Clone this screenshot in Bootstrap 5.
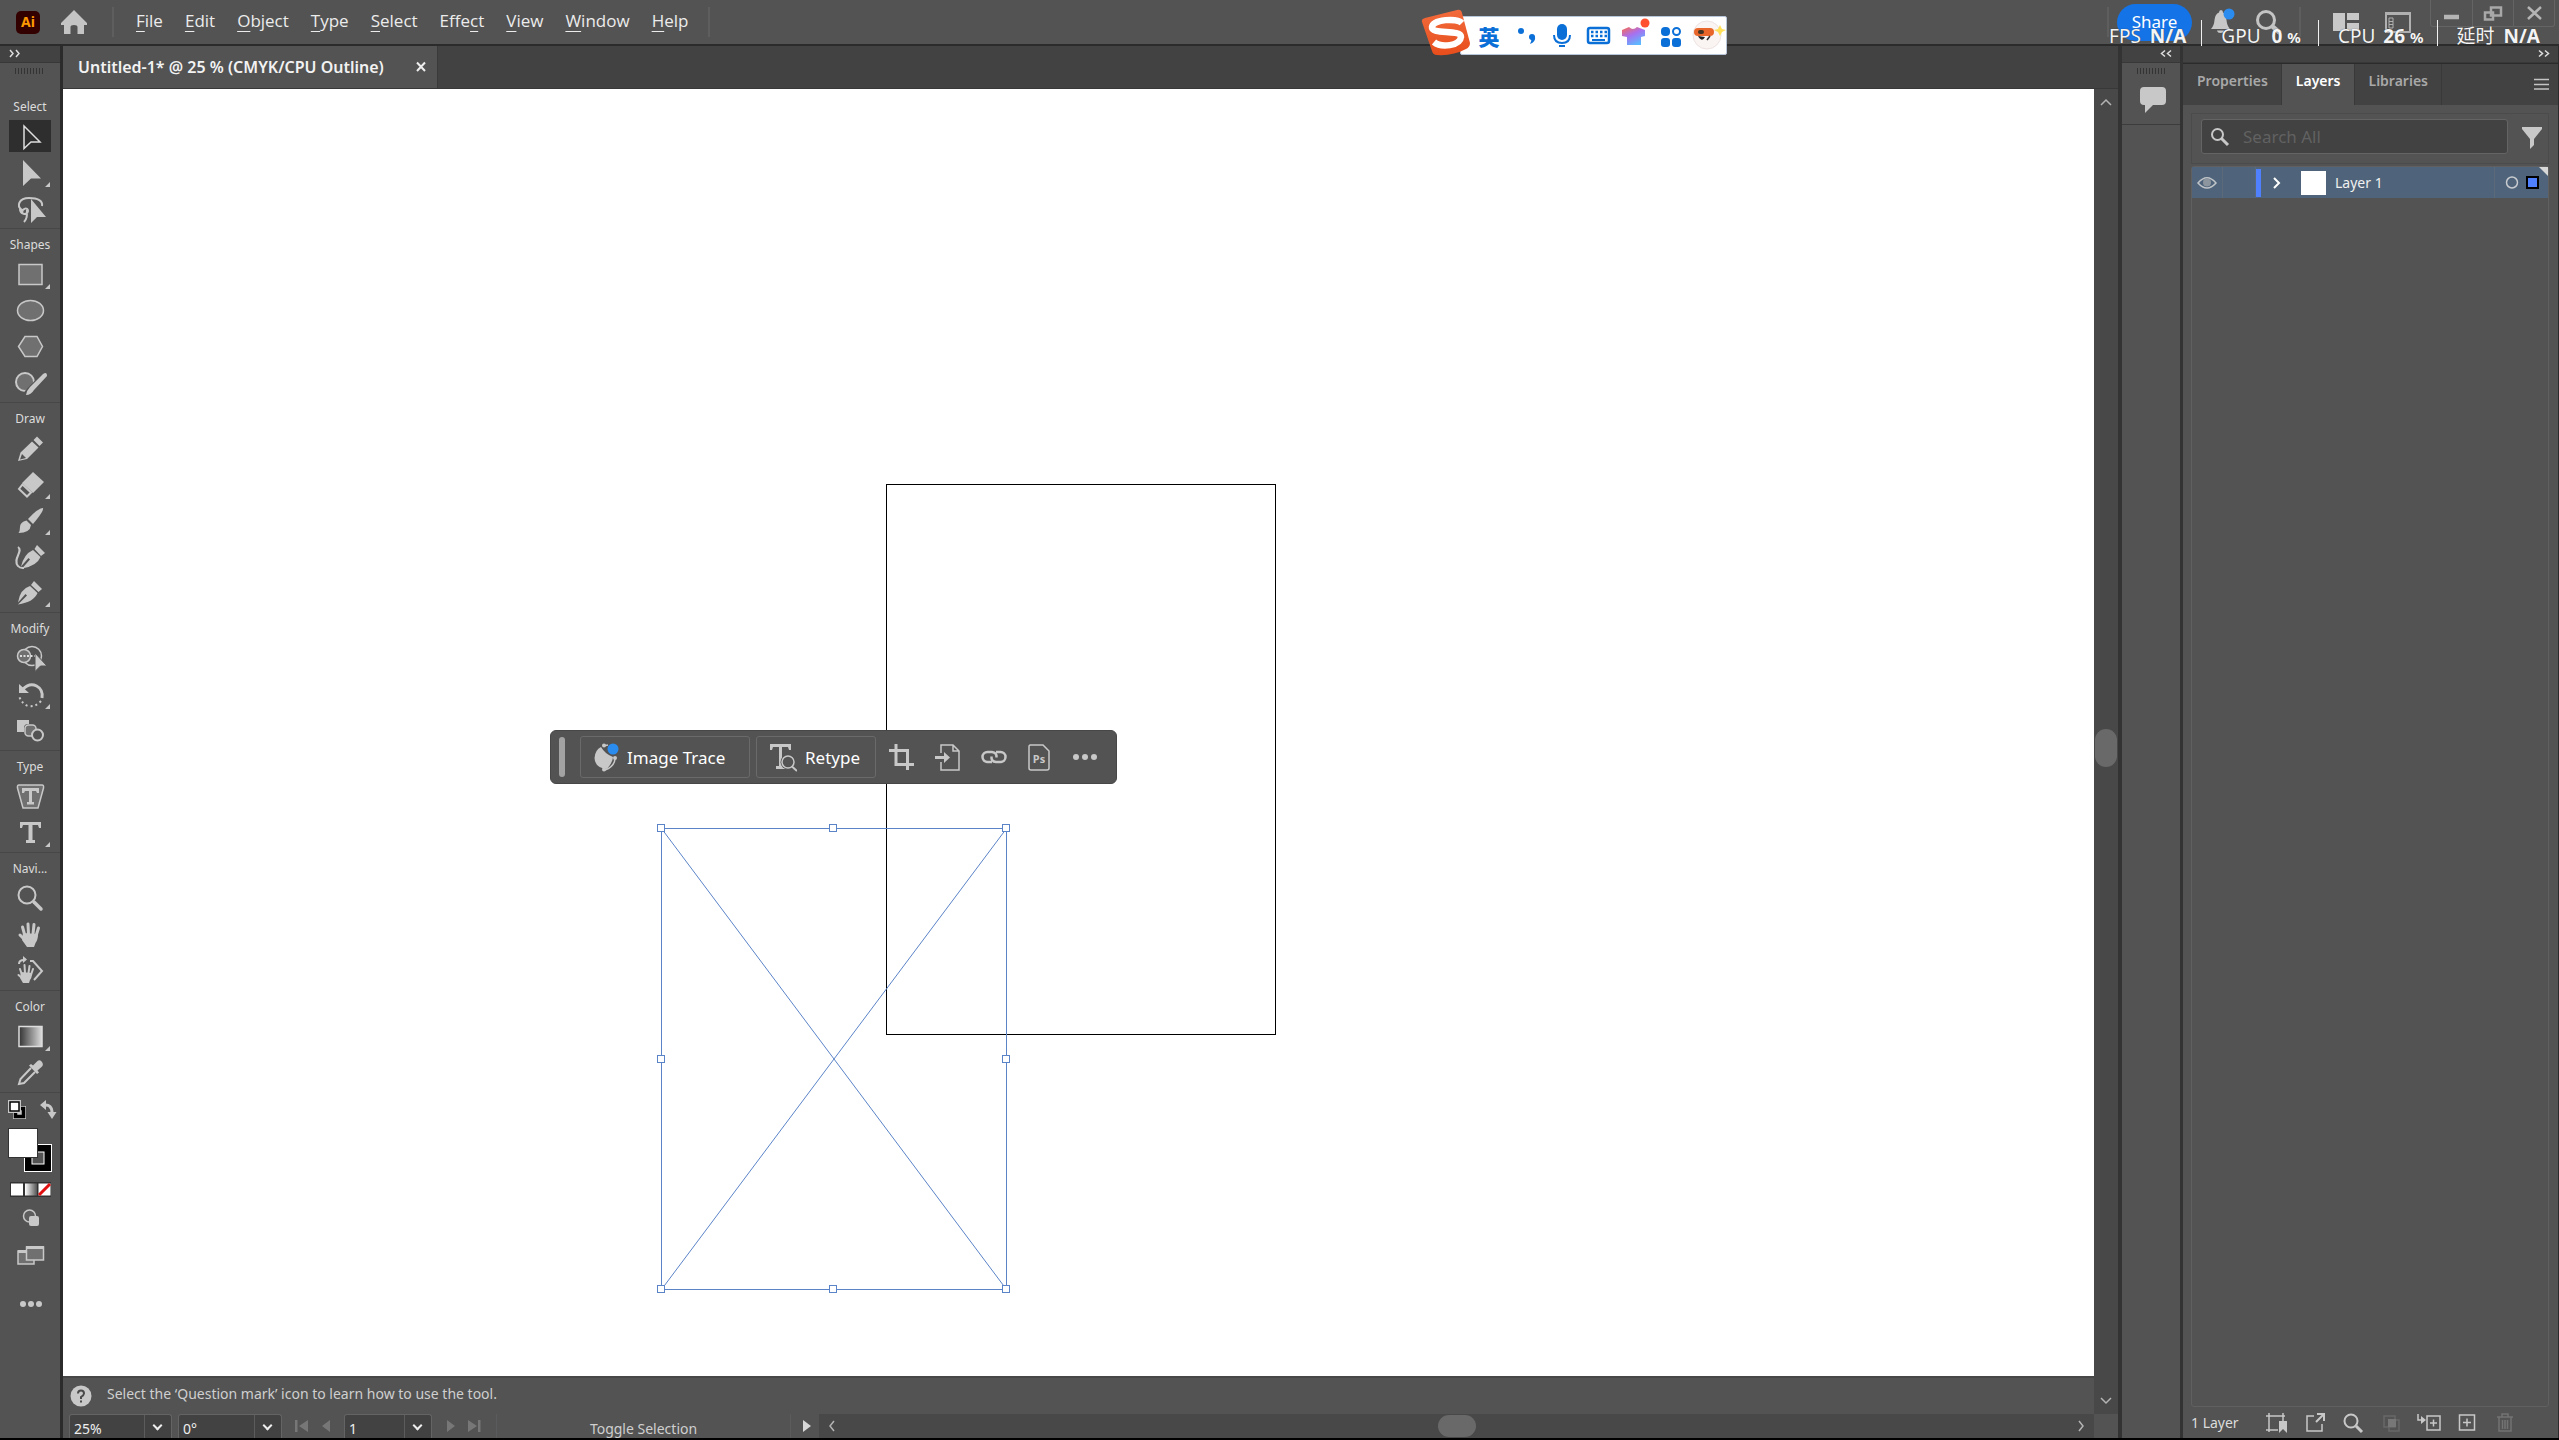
<!DOCTYPE html>
<html lang="en">
<head>
<meta charset="utf-8">
<meta name="viewport" content="width=device-width, initial-scale=1">
<title>Untitled-1* @ 25 % (CMYK/CPU Outline)</title>
<link href="https://cdn.jsdelivr.net/npm/bootstrap@5.3.0/dist/css/bootstrap.min.css" rel="stylesheet">
<style>
:root{--ui:#535353;--dark:#424242;--line:#2b2b2b;--soft:#484848;--ico:#c8c8c8;--txt:#dcdcdc}
body{background:var(--ui);color:var(--txt);font-family:"Noto Sans","Noto Sans CJK SC",sans-serif;font-size:14px;line-height:20px;border-bottom:2px solid #000;overflow:hidden}
button{background:none;border:0;padding:0;color:inherit;display:block}
svg{display:block;fill:none;stroke:none}
.f{fill:var(--ico)}.s{stroke:var(--ico);stroke-width:2}.sf{stroke:var(--ico);stroke-width:2;fill:#707070}
.app-bar{height:46px;border-bottom:2px solid var(--line)}
.rule-v{width:2px;height:30px;background:#5e5e5e}
.menus{gap:22px;padding:0 20px 2px 22px}
.menus a{color:#ececec;text-decoration:none;font-family:"Open Sans","Noto Sans",sans-serif;font-size:17px;line-height:24px}
.menus u{text-underline-offset:4px;text-decoration-thickness:1px}
.share{width:75px;height:37px;border-radius:19px;background:#1473e6;color:#fff;font-size:17px}
.win-ctl{height:27px;margin-left:19px;margin-right:4px;border:1px solid #646464;border-top:0;border-radius:0 0 3px 3px}
.win-ctl button{width:41px;height:26px}
.win-ctl button+button{border-left:1px solid #646464}
/* left tool column */
.tools{width:63px;border-right:3px solid var(--line);flex:none}
.strip{height:17px;background:var(--dark);border-bottom:1px solid #383838}
.grip-row{height:28px}
.tool-group{border-bottom:1px solid #474747;margin:0;padding-bottom:2px}
.tool-group h2{font-size:12px;line-height:18px;font-weight:400;text-align:center;margin:0;padding:7px 0 2px}
.tool-group button{width:60px;height:36px}
.tool-group button.on svg{background:linear-gradient(#2e2e2e,#2e2e2e) center/42px 32px no-repeat}
/* document */
.doc{min-width:0}
.tab-strip{height:43px;background:var(--dark);border-bottom:1px solid #383838}
.doc-tab{background:var(--ui);padding:0 10px 0 15px;width:375px;color:#f2f2f2;font-size:16px;font-weight:600;border-right:1px solid #3a3a3a;white-space:nowrap}
.canvas-area{background:#fff;min-height:0}
.v-scroll{width:24px;background:var(--soft)}
.v-thumb{width:22px;height:38px;border-radius:11px;background:#696969;margin-bottom:8px}
.help-bar{height:38px;padding:0 11px;border-top:2px solid #474747;color:#cfcfcf;gap:15px}
.status-bar{height:24px}
.combo{border:1px solid #646464;border-bottom:0;background:var(--dark);border-radius:3px 3px 0 0;height:24px}
.combo select{appearance:none;background:none;border:0;color:#eee;width:100%;height:23px;padding:4px 0 0 4px;outline:0;font-size:14px;line-height:19px}
.combo::before{content:"";position:absolute;right:26px;top:0;bottom:0;border-left:1px solid #5c5c5c}
.combo::after{content:"";position:absolute;right:10px;top:7px;width:7px;height:7px;border:solid #eee;border-width:0 2px 2px 0;transform:rotate(45deg);pointer-events:none}
.status-label{width:295px;padding-top:5px;color:#cfcfcf;line-height:19px}
.h-scroll{background:var(--soft)}
.h-thumb{width:38px;height:22px;border-radius:11px;background:#696969}
/* contextual bar */
.ctx-bar{left:487px;top:641px;width:567px;height:54px;background:var(--ui);border-radius:6px;padding:0 18px 0 8px;border:1px solid #474747}
.ctx-grip{width:6px;height:40px;border-radius:3px;background:#a3a3a3;margin-right:15px}
.ctx-bar .boxed{border:1px solid #6a6a6a;border-radius:3px;height:42px;color:#fff;font-size:17px;padding-left:12px;gap:8px}
.ctx-bar .boxed span{padding-top:2px}
/* right side */
.dock{width:65px;border-left:4px solid #333;border-right:3px solid #333;flex:none}
.panel{width:376px;border-right:1px solid var(--line);flex:none}
.panel-tabs{height:42px;background:var(--dark);border-top:1px solid var(--line)}
.panel-tabs .nav-link{padding:7px 13px 9px 14px;color:#a8a8a8;font-size:14px;font-weight:600;line-height:20px;border-right:1px solid #393939;border-radius:0}
.panel-tabs .nav-link.active{background:var(--ui);color:#fff}
.search-group{border:1px solid #4b4b4b;height:51px;padding:5px 5px 0 9px;margin-top:8px}
.search-field{width:307px;height:35px;border:1px solid #646464;border-radius:3px;background:var(--dark);padding:0 9px 0 8px;gap:13px}
.search-field input{background:none;border:0;outline:0;color:#ddd;font-size:17px;width:100%;padding:0}
.search-field input::placeholder{color:#616161;opacity:1}
.layer-list{border:1px solid #606060;border-radius:3px;margin-top:2px}
.layer-row{height:31px;background:#4f647a;color:#f0f0f0}
.layer-row .cell{height:31px;border-right:1px solid #5b6a7b}
.panel-foot{height:31px;padding:0 34px 0 8px}
.panel-foot button{width:38px}
.panel-foot svg{margin:0 auto}
.wrap-x{padding:0 9px 0 8px}
/* floating overlays */
.ime{left:calc(50% + 141px);top:8px;height:48px;width:306px}
.ime-body{left:39px;top:8px;right:0;height:39px;background:#fff;border:1px solid #b8c6da;border-radius:2px}
.ime-cn{font:900 21px/30px "Noto Sans CJK SC",sans-serif;color:#0b6fd8;margin-left:18px}
.perf{right:19px;top:20px;height:26px;color:#f4f4f4;font-size:19px;line-height:26px;text-shadow:0 0 1px #333}
.perf>div+div{border-left:1px solid #f0f0f0}
.perf>div>*{margin-top:3px}
.perf small{font-size:15px;font-weight:700}
</style>
<script src="https://cdn.jsdelivr.net/npm/bootstrap@5.3.0/dist/js/bootstrap.bundle.min.js"></script>
</head>
<body class="vh-100 d-flex flex-column position-relative m-0">

<header class="app-bar d-flex align-items-center flex-shrink-0">
  <svg class="ms-3 me-3" width="24" height="23" viewBox="0 0 24 23"><rect width="24" height="23" rx="5" fill="#330000"/><text x="12" y="16" text-anchor="middle" font-size="14" font-weight="700" fill="#ff9a00">Ai</text></svg>
  <button class="ms-1" aria-label="Home"><svg width="28" height="26" viewBox="0 0 28 26"><path fill="#c4c4c4" d="M14 1 L27 14 V16 H24 V25 H17.500 V18 Q17.500 16 14 16 T10.500 18 V25 H4 V16 H1 V14Z"/></svg></button>
  <div class="rule-v ms-4"></div>
  <nav class="menus d-flex">
    <a href="#"><u>F</u>ile</a><a href="#"><u>E</u>dit</a><a href="#"><u>O</u>bject</a><a href="#"><u>T</u>ype</a><a href="#"><u>S</u>elect</a><a href="#">Effe<u>c</u>t</a><a href="#"><u>V</u>iew</a><a href="#"><u>W</u>indow</a><a href="#"><u>H</u>elp</a>
  </nav>
  <div class="rule-v"></div>
  <div class="ms-auto d-flex align-items-center h-100">
    <div class="rule-v me-2"></div>
    <button class="share">Share</button>
    <button style="margin-left:19px" aria-label="Notifications"><svg width="28" height="28" viewBox="0 0 28 28"><path class="f" d="M0 21 Q3 18 3.500 12 Q4 6 8 4.500 Q8 2 10 2 T12 4.500 Q15 6 15.500 12 Q16 18 19 21Z M6 22.500 H13 Q12.500 25 9.500 25 T6 22.500Z"/><circle cx="18" cy="6" r="5.500" fill="#2b8cf0"/></svg></button>
    <button class="ms-3" aria-label="Search"><svg width="28" height="28" viewBox="0 0 28 28"><g stroke="#c4c4c4"><circle cx="11" cy="12" r="8.500" stroke-width="3"/><path d="M17.500 18.500 L25 25" stroke-width="4.500"/></g></svg></button>
    <div class="rule-v ms-3" style="margin-right:32px"></div>
    <button aria-label="Workspace"><svg width="26" height="26" viewBox="0 0 26 26"><path class="f" d="M0 4 H12 V22 H0Z M14 4 H26 V11 H14Z M14 14 H26 V22 H14Z"/></svg></button>
    <button style="margin-left:26px" aria-label="Screen"><svg width="26" height="26" viewBox="0 0 26 26"><path d="M1 4 H25 V23 H1Z" stroke="#b0b0b0" stroke-width="2"/><path d="M1 4.500 H25" stroke="#b0b0b0" stroke-width="3"/><path d="M4 9 H8 V19 H4Z M4 12.500 H8 M4 15.500 H8" stroke="#b0b0b0"/></svg></button>
    <div class="win-ctl d-flex align-self-start">
      <button aria-label="Minimize"><svg width="40" height="26"><path d="M13 17 H28" stroke="#b4b4b4" stroke-width="4.500"/></svg></button>
      <button aria-label="Restore"><svg width="40" height="26"><path d="M18 7.500 H28 V15.500 H18Z M12 12.500 H20 V19.500 H12Z" stroke="#a8a8a8" stroke-width="2.500"/></svg></button>
      <button aria-label="Close"><svg width="40" height="26"><path d="M14 7 L27 19 M27 7 L14 19" stroke="#b4b4b4" stroke-width="2.500"/></svg></button>
    </div>
  </div>
</header>

<main class="d-flex flex-grow-1" style="min-height:0">
  <aside class="tools d-flex flex-column">
    <div class="strip"><svg width="60" height="16"><path d="M10 4 L13 7.500 L10 11 M16 4 L19 7.500 L16 11" stroke="#ddd" stroke-width="1.500"/></svg></div>
    <div class="grip-row"><svg width="60" height="28"><path d="M15 8 H44" stroke="#343434" stroke-width="6" stroke-dasharray="1 2"/></svg></div>
    <section class="tool-group"><h2>Select</h2>
      <button class="on" aria-label="Selection"><svg width="60" height="36"><path d="M24 8 V30.500 L31 24 H40Z" stroke="#dedede" stroke-width="1.500"/></svg></button>
      <button aria-label="Direct selection"><svg width="60" height="36"><path class="f" d="M23 6 V32 L31 24.500 H41Z M50 28 V33 H45Z"/></svg></button>
      <button aria-label="Lasso"><svg width="60" height="36"><path class="s" d="M22 20 C16 16 19 8 29 8 C38 8 43 11 42 16 M20 19 C20 24 27 26 28 21 C28 17 22 18 22 23 M27 20 C27 26 27 29 24 32"/><path class="f" d="M31 9 V33 L37 27 H46Z"/></svg></button>
    </section>
    <section class="tool-group"><h2>Shapes</h2>
      <button aria-label="Rectangle"><svg width="60" height="36"><path class="sf" style="stroke-width:1.500" d="M19 8.500 H42 V28.500 H19Z"/><path class="f" d="M50 28 V33 H45Z"/></svg></button>
      <button aria-label="Ellipse"><svg width="60" height="36"><ellipse class="sf" style="stroke-width:1.500" cx="30.500" cy="18.500" rx="13" ry="10"/></svg></button>
      <button aria-label="Polygon"><svg width="60" height="36"><path class="sf" style="stroke-width:1.500" d="M25 8.500 H37 L42.500 18.500 L37 28.500 H25 L18.500 18.500Z"/></svg></button>
      <button aria-label="Shaper"><svg width="60" height="36"><circle class="sf" cx="25" cy="18" r="9"/><path d="M27 30 L44 12" stroke="#535353" stroke-width="7"/><path class="f" d="M43 10 Q47 7 47 12 L34 26 Q31 31 26 31 Q27 26 30 23Z"/></svg></button>
    </section>
    <section class="tool-group"><h2>Draw</h2>
      <button aria-label="Pencil"><svg width="60" height="36"><path class="f" d="M37 6.500 L43 12.500 L39.500 16 L33.500 10Z M32 11.500 L38.500 17.500 L27 29 L18 31 L20.500 22.500Z"/><path fill="#535353" d="M22 24 L26 28 L20 29.500Z"/></svg></button>
      <button aria-label="Eraser"><svg width="60" height="36"><path class="f" d="M33 6 L44 16 L33 27 L22 17Z M50 28 V33 H45Z"/><path class="s" d="M22.500 18.500 L31 26.500 L27 30.500 L19 23Z"/></svg></button>
      <button aria-label="Paintbrush"><svg width="60" height="36"><path class="f" d="M43 6 Q44 9 33 22 L28 17 Q38 6 43 6Z M26.500 18.500 L31 23 Q30 31 18.500 31 Q20 29 20 25 Q20 20 26.500 18.500Z M50 28 V33 H45Z"/></svg></button>
      <button aria-label="Curvature"><svg width="60" height="36"><path class="f" d="M37 7 L45 15 L41 18 L34.500 11Z M33 12 L40.500 19 Q37 28 22 30.500 L30 21.500 L28.500 20 L21 28.500 Q24 16 33 12Z"/><path class="s" d="M18 9 C24 13 12 21 18 28 Q20 30.500 24 30"/></svg></button>
      <button aria-label="Pen"><svg width="60" height="36"><path class="f" d="M34 7 L42 15 L38.500 18 L31 11Z M30 12 L37.500 19 Q34 28 18 30.500 L27 21.500 L25.500 20 L18 28.500 Q20 15 30 12Z M50 28 V33 H45Z"/></svg></button>
    </section>
    <section class="tool-group"><h2>Modify</h2>
      <button aria-label="Shape builder"><svg width="60" height="36"><circle class="s" cx="32" cy="16" r="9.500" style="stroke-width:1.500"/><circle class="sf" cx="24" cy="16" r="6.500" style="stroke-width:1.500"/><path d="M20 16 H36" stroke="#ddd" stroke-width="2" stroke-dasharray="2 1.500"/><path class="f" stroke="#535353" d="M35 13 V31.500 L40.500 26 H47Z"/></svg></button>
      <button aria-label="Rotate"><svg width="60" height="36"><path class="s" style="stroke-width:3" d="M23 13 C32 4 44 11 42 22"/><path class="f" d="M19 8 V17 H29Z M50 28 V33 H45Z"/><path class="s" d="M41 25 Q36 31 28 30 Q22 28 19 20" stroke-dasharray="2 3"/></svg></button>
      <button aria-label="Blend"><svg width="60" height="36"><path class="f" d="M17 8 H29 V20 H17Z"/><rect x="24" y="12" width="14" height="14" rx="4" fill="#535353"/><rect class="sf" style="stroke-width:1.500" x="25" y="13" width="11" height="11" rx="3.500"/><circle cx="37.500" cy="23" r="5.500" class="s" fill="#535353"/></svg></button>
    </section>
    <section class="tool-group"><h2>Type</h2>
      <button aria-label="Type on shape"><svg width="60" height="36"><path class="sf" style="stroke-width:1.500" d="M19 7 H42 Q44 7 43.500 10 L38 30 H23 L17.500 10 Q17 7 19 7Z"/><path class="f" d="M22 10 H39 V15 H37 L36 13 H32 V24 H34 V26.500 H27 V24 H29 V13 H25 L24 15 H22Z"/></svg></button>
      <button aria-label="Type"><svg width="60" height="36"><path class="f" d="M20 8 H41 V14 H39 L38 11 H32.500 V26 H35 V29 H26 V26 H28.500 V11 H23 L22 14 H20Z M50 28 V33 H45Z"/></svg></button>
    </section>
    <section class="tool-group"><h2>Navi...</h2>
      <button aria-label="Zoom"><svg width="60" height="36"><circle class="s" cx="27" cy="15" r="8.500"/><path class="s" style="stroke-width:3.500" stroke-linecap="round" d="M34 22 L41 29"/></svg></button>
      <button aria-label="Hand"><svg width="60" height="36"><path class="s" style="stroke-width:3" stroke-linecap="round" d="M25 20 L22.500 11 M28.500 18 L28 8 M33 18 L34 8.500 M36 20 L38.500 12 M25 24 L20 19"/><path class="f" d="M23 17 L38 18 Q38 24 35.500 27 L34 31 H27 L22 24Z"/></svg></button>
      <button aria-label="Rotate view"><svg width="60" height="36"><path class="s" stroke-linecap="round" d="M22 23 L20 17 M25 21 L24.500 13 M28.500 21 L29.500 14 M31 23 L33 17 M22 26 L18.500 23"/><path class="f" d="M21 20 L32 21 Q32 26 30 28 L29 31 H23 L20 26Z M23 4 L27 7.500 L23 11Z"/><path class="s" d="M19 12 Q19 8 24 8 M30 9 H33 L42 19 L34 28"/></svg></button>
    </section>
    <section class="tool-group"><h2>Color</h2>
      <button aria-label="Gradient"><svg width="60" height="36"><defs><linearGradient id="gr"><stop stop-color="#333"/><stop offset="1" stop-color="#ddd"/></linearGradient></defs><path fill="url(#gr)" stroke="#ddd" stroke-width="1.500" d="M19 8.500 H42 V28.500 H19Z"/><path class="f" d="M50 28 V33 H45Z"/></svg></button>
      <button aria-label="Eyedropper"><svg width="60" height="36"><path class="s" d="M31 14 L20.500 25 L19 30 L24 29 L35 18"/><path class="f" d="M29 11.500 L31 10 L33 11.500 L37 7.500 Q40 5 42 8 T41.500 13 L37.500 16.500 L39 18.500 L37 20Z"/></svg></button>
    </section>
    <button aria-label="Default and swap"><svg width="60" height="31"><rect x="13" y="13" width="13" height="13" fill="#c8c8c8"/><rect x="15.500" y="15.500" width="8" height="8" stroke="#000" stroke-width="3.500" fill="#c8c8c8"/><rect x="8" y="7" width="13" height="13" fill="#c8c8c8"/><rect x="10" y="9" width="9" height="9" fill="#fff" stroke="#000" stroke-width="1.500"/><path class="s" style="stroke-width:3" d="M44 12 Q52 11 52 20"/><path class="f" d="M40 12 L46 7 V17Z M47.500 19 H56.500 L52 26Z"/></svg></button>
    <button aria-label="Fill and stroke"><svg width="60" height="52"><rect x="24.500" y="20.500" width="27" height="27" fill="#000" stroke="#fff"/><rect x="32" y="28" width="12" height="12" fill="#535353" stroke="#fff"/><rect x="8.500" y="4.500" width="29" height="29" fill="#fff" stroke="#333"/></svg></button>
    <button aria-label="Colour, gradient, none"><svg width="60" height="26"><defs><linearGradient id="gw"><stop stop-color="#fff"/><stop offset="1" stop-color="#555"/></linearGradient></defs><rect x="10" y="6" width="41" height="15" fill="#333"/><rect x="11" y="7.500" width="12" height="12" fill="#fff"/><rect x="25" y="7.500" width="12" height="12" fill="url(#gw)"/><rect x="38.500" y="7.500" width="12" height="12" fill="#fff"/><path d="M39 19 L50 8" stroke="#e01010" stroke-width="3"/></svg></button>
    <button aria-label="Draw mode"><svg width="60" height="34"><circle cx="29.500" cy="14" r="6" class="sf" style="stroke-width:1.500;fill:#5e5e5e"/><rect class="f" x="29" y="14" width="10" height="10" rx="2"/></svg></button>
    <button aria-label="Screen mode"><svg width="60" height="44"><path class="sf" style="stroke-width:1.500" d="M18 15 H34 V28 H18Z"/><path class="sf" style="stroke-width:1.500" d="M26.500 11 H43.500 V24 H26.500Z"/><path d="M18 15.500 H26 M26 11.500 H44" class="s" style="stroke-width:3"/></svg></button>
    <button aria-label="Edit toolbar"><svg width="60" height="50"><g class="f"><circle cx="23" cy="24" r="3"/><circle cx="31" cy="24" r="3"/><circle cx="39" cy="24" r="3"/></g></svg></button>
  </aside>

  <section class="doc d-flex flex-column flex-grow-1">
    <div class="tab-strip d-flex flex-shrink-0">
      <div class="doc-tab d-flex align-items-center justify-content-between"><span>Untitled-1* @ 25 % (CMYK/CPU Outline)</span><button aria-label="Close document"><svg width="12" height="12"><path d="M2 1.500 L10 10 M10 1.500 L2 10" stroke="#eee" stroke-width="2"/></svg></button></div>
    </div>
    <div class="d-flex flex-grow-1" style="min-height:0">
      <div class="d-flex flex-column flex-grow-1" style="min-width:0">
        <div class="canvas-area position-relative flex-grow-1 overflow-hidden">
          <svg class="position-absolute top-0 start-0 w-100 h-100">
            <rect x="823.500" y="395.500" width="389" height="550" stroke="#000"/>
            <g stroke="#5b84c8"><path d="M598.500 739.500 L943.500 1200.500 M943.500 739.500 L598.500 1200.500"/><rect x="598.500" y="739.500" width="345" height="461"/>
            <g fill="#fff"><rect x="594.500" y="735.500" width="7" height="7"/><rect x="766.500" y="735.500" width="7" height="7"/><rect x="939.500" y="735.500" width="7" height="7"/><rect x="594.500" y="966.500" width="7" height="7"/><rect x="939.500" y="966.500" width="7" height="7"/><rect x="594.500" y="1196.500" width="7" height="7"/><rect x="766.500" y="1196.500" width="7" height="7"/><rect x="939.500" y="1196.500" width="7" height="7"/></g></g>
          </svg>
          <div class="ctx-bar position-absolute d-flex align-items-center">
            <div class="ctx-grip"></div>
            <button class="boxed d-flex align-items-center" style="width:170px;margin-right:6px"><svg width="26" height="30"><path class="f" d="M8 5 Q12 12 20 15 Q20 20 14 27 Q2 26 1.500 16 Q2 8 8 5Z"/><path class="s" style="stroke-width:1.500" d="M22 17 Q21 25 12 28 M10 4 L15 3"/><circle class="f" cx="11" cy="3.500" r="2"/><circle class="f" cx="11" cy="27.500" r="2"/><circle class="f" cx="22" cy="16" r="2"/><circle cx="20" cy="7" r="5.500" fill="#2b8cf0"/></svg><span>Image Trace</span></button>
            <button class="boxed d-flex align-items-center" style="width:120px;margin-right:13px"><svg width="28" height="30"><path class="f" d="M1 2 H22 V8 H20 L19 5 H13 V24 H16 V27 H7 V24 H10 V5 H4 L3 8 H1Z"/><circle cx="19" cy="20" r="7.500" fill="#535353"/><circle cx="19" cy="20" r="6" class="s" style="stroke-width:1.500"/><path class="s" d="M23 24.500 L28 29"/></svg><span>Retype</span></button>
            <div class="d-flex flex-grow-1 justify-content-between">
              <button aria-label="Crop"><svg width="26" height="30"><path class="s" style="stroke-width:3" d="M0 8.500 H18.500 V28 M7 2 V22.500 H25"/></svg></button>
              <button aria-label="Embed"><svg width="26" height="30"><path class="s" style="stroke-width:1.500" d="M6 11 V3 H18 L24 9 V28 H6 V20 M18 3 V9 H24"/><path class="f" d="M0 14 H9 V10 L15 15.500 L9 21 V17 H0Z"/></svg></button>
              <button aria-label="Link"><svg width="26" height="30"><g class="s" style="stroke-width:2.500"><path d="M11 20 H6.500 A5 5 0 0 1 6.500 10 H11 Q16 10.500 15.500 15.500"/><path d="M15 10 H19.500 A5 5 0 0 1 19.500 20 H15 Q10 19.500 10.500 14.500"/></g></svg></button>
              <button aria-label="Edit in Photoshop"><svg width="26" height="30"><path class="s" style="stroke-width:1.500" d="M4 3 H17 L23 9 V26 Q23 28 21 28 H5 Q3 28 3 26 V4Z"/><text x="13" y="21" text-anchor="middle" font-size="11" font-weight="700" fill="#c8c8c8">Ps</text></svg></button>
              <button aria-label="More"><svg width="26" height="30"><g class="f"><circle cx="4" cy="15" r="3"/><circle cx="13" cy="15" r="3"/><circle cx="22" cy="15" r="3"/></g></svg></button>
            </div>
          </div>
        </div>
        <div class="help-bar d-flex align-items-center flex-shrink-0">
          <svg width="22" height="22" viewBox="0 0 22 22" style="margin-left:-4px"><circle cx="11" cy="11" r="10.500" fill="#c8c8c8"/><path d="M8 8.500 Q8 5.500 11 5.500 T14 8.500 Q14 10 11 12 V14 M11 15.500 V17.500" stroke="#4a4a4a" stroke-width="2"/></svg>
          <span class="pb-1">Select the ‘Question mark’ icon to learn how to use the tool.</span>
        </div>
      </div>
      <div class="v-scroll d-flex flex-column align-items-center justify-content-between py-2 flex-shrink-0">
        <svg width="14" height="12"><path d="M2 8 L7 3 L12 8" stroke="#b4b4b4" stroke-width="1.500"/></svg>
        <div class="v-thumb"></div>
        <svg width="14" height="12"><path d="M2 4 L7 9 L12 4" stroke="#b4b4b4" stroke-width="1.500"/></svg>
      </div>
    </div>
    <div class="status-bar d-flex align-items-stretch flex-shrink-0">
      <div class="combo position-relative" style="width:103px;margin-left:6px"><select aria-label="Zoom level"><option>25%</option></select></div>
      <div class="combo position-relative" style="width:104px;margin-left:6px"><select aria-label="Rotation"><option>0°</option></select></div>
      <svg width="62" height="24"><path fill="#777" d="M13 6 H15.500 V18 H13Z M26 6 V18 L17 12Z M48 6 V18 L40 12Z"/></svg>
      <div class="combo position-relative" style="width:88px"><select aria-label="Artboard"><option>1</option></select></div>
      <svg width="64" height="24"><path fill="#777" d="M15 6 V18 L23 12Z M36 6 V18 L45 12Z M46 6 H48.500 V18 H46Z"/></svg>
      <div class="status-label text-center border-start border-end border-secondary border-opacity-25">Toggle Selection</div>
      <svg width="28" height="24"><path fill="#d8d8d8" d="M12 6 V18 L20 12Z"/></svg>
      <div class="h-scroll d-flex align-items-center justify-content-between flex-grow-1" style="padding:0 7px">
        <svg width="12" height="14"><path d="M8 2 L4 7 L8 12" stroke="#b4b4b4" stroke-width="1.500"/></svg>
        <div class="h-thumb"></div>
        <svg width="12" height="14"><path d="M4 2 L8 7 L4 12" stroke="#b4b4b4" stroke-width="1.500"/></svg>
      </div>
      <div style="width:24px"></div>
    </div>
  </section>

  <aside class="dock">
    <div class="strip d-flex justify-content-end pe-2"><svg width="14" height="16"><path d="M7 4.500 L3.500 7.500 L7 10.500 M13 4.500 L9.500 7.500 L13 10.500" stroke="#ddd" stroke-width="1.500"/></svg></div>
    <div class="border-bottom border-dark border-opacity-50" style="height:62px">
      <svg width="58" height="17"><path d="M15 8 H44" stroke="#343434" stroke-width="6" stroke-dasharray="1 2"/></svg>
      <button style="margin-left:17px" aria-label="Comments"><svg width="28" height="34"><path class="f" d="M5 7 H23 Q27 7 27 11 V21 Q27 25 23 25 H14 L6 33 V25 H5 Q1 25 1 21 V11 Q1 7 5 7Z"/></svg></button>
    </div>
  </aside>

  <aside class="panel d-flex flex-column">
    <div class="strip d-flex justify-content-end pe-2"><svg width="14" height="16"><path d="M3 4.500 L6.500 7.500 L3 10.500 M9 4.500 L12.500 7.500 L9 10.500" stroke="#ddd" stroke-width="1.500"/></svg></div>
    <nav class="panel-tabs nav flex-nowrap flex-shrink-0">
      <a class="nav-link" href="#">Properties</a><a class="nav-link active" href="#">Layers</a><a class="nav-link" href="#">Libraries</a>
      <button class="ms-auto me-2" aria-label="Panel menu"><svg width="17" height="14"><path d="M1 1.500 H16 M1 6.500 H16 M1 11 H16" stroke="#c4c4c4" stroke-width="1.500"/></svg></button>
    </nav>
    <div class="wrap-x d-flex flex-column flex-grow-1">
      <div class="search-group d-flex align-items-start justify-content-between">
        <label class="search-field d-flex align-items-center"><svg class="flex-shrink-0" width="20" height="20"><circle class="s" cx="7.500" cy="7.500" r="5.500"/><path class="s" style="stroke-width:3" d="M11.500 11.500 L18 18"/></svg><input type="search" placeholder="Search All" aria-label="Search All"></label>
        <button aria-label="Filter" class="pt-2"><svg width="22" height="22"><path class="f" d="M1 0 H21 V2 L13 12 V18 L9 22 V12 L1 2Z"/></svg></button>
      </div>
      <div class="layer-list flex-grow-1">
        <div class="layer-row d-flex align-items-center position-relative">
          <div class="cell d-flex align-items-center" style="width:31px;padding-left:5px"><svg width="20" height="14"><path d="M1 7 Q10 -3.500 19 7 Q10 17 1 7Z" stroke="#c0c4c8" stroke-width="1.500"/><circle cx="10" cy="6.500" r="4" fill="#8d969f"/></svg></div>
          <div class="cell" style="width:33px"></div>
          <div style="width:5px;height:28px;background:#4f80ff"></div>
          <svg style="margin-left:10px" width="12" height="14"><path d="M3 2 L8 7 L3 12" stroke="#fff" stroke-width="2"/></svg>
          <div class="bg-white" style="width:25px;height:24px;margin-left:18px"></div>
          <span style="margin-left:9px">Layer 1</span>
          <div class="cell ms-auto"></div>
          <svg style="margin-left:10px;margin-right:6px" width="37" height="15"><circle cx="7" cy="7.500" r="5.500" stroke="#c8ccd0" stroke-width="1.500"/><rect x="22" y="2" width="11" height="11" fill="#4f80ff" stroke="#000" stroke-width="2"/></svg>
          <svg class="position-absolute top-0 end-0" width="9" height="9"><path d="M0 0 H9 V9Z" fill="#d8d8d8"/></svg>
        </div>
      </div>
    </div>
    <div class="panel-foot d-flex align-items-center justify-content-between flex-shrink-0">
      <span>1 Layer</span>
      <div class="d-flex">
      <button aria-label="Artboard from layer"><svg width="24" height="22"><path class="s" style="stroke-width:1.500" d="M4 1 V20 M1 4 H20 M18 1 V10 M1 18 H13"/><path class="f" d="M14 9 H22 V21 L18 17 L14 21Z"/></svg></button>
      <button aria-label="Export"><svg width="22" height="22"><path class="s" style="stroke-width:1.500" d="M10 4 H3 V19 H18 V12"/><path class="s" d="M12 10 L19 3 M13 2 H20 V9"/></svg></button>
      <button aria-label="Locate"><svg width="22" height="22"><circle class="s" cx="9" cy="9" r="6.500"/><path class="s" style="stroke-width:3" d="M14 14 L20 20"/></svg></button>
      <button aria-label="Clipping mask"><svg width="20" height="22"><path d="M3 4 H14 V15 H3Z M8 8 H18 V19 H8Z" stroke="#686868" stroke-width="1.500"/><path fill="#777" d="M7 7 H15 V15 H7Z"/></svg></button>
      <button aria-label="New sublayer"><svg width="26" height="22"><path class="s" style="stroke-width:1.500" d="M11 4 H24 V18 H11Z M17.500 7.500 V14.500 M14 11 H21 M2 2 V8 H6"/><path class="f" d="M5 4 L10 8 L5 12Z"/></svg></button>
      <button aria-label="New layer"><svg width="18" height="22"><path class="s" style="stroke-width:1.500" d="M1.500 3 H16.500 V18 H1.500Z M9 6.500 V14.500 M5 10.500 H13"/></svg></button>
      <button aria-label="Delete"><svg width="18" height="22"><path d="M1 5 H17 M6 5 V2 H12 V5 M3 5 V19 H15 V5 M6.500 8 V17 M9 8 V17 M11.500 8 V17" stroke="#737373" stroke-width="1.500"/></svg></button>
      </div>
    </div>
  </aside>
</main>

<!-- input-method bar -->
<div class="ime position-absolute">
  <div class="ime-body position-absolute d-flex align-items-center">
    <span class="ime-cn">英</span>
    <svg width="226" height="37" viewBox="-1 0 226 37">
      <g fill="#0b6fd8">
        <circle cx="20" cy="14" r="3"/><circle cx="31" cy="20" r="3"/><path d="M34 19 Q35 25 29 27 Q31 24 30 21Z"/>
        <rect x="56" y="7" width="10" height="16" rx="5"/>
        <path d="M53 18 Q53 26 61 26 T69 18" fill="none" stroke="#0b6fd8" stroke-width="2"/><rect x="58" y="28" width="6" height="2"/>
        <rect x="87" y="11" width="21" height="15" rx="2" fill="none" stroke="#0b6fd8" stroke-width="2.500"/>
        <path d="M90 15 H106 M90 19 H106" stroke="#0b6fd8" stroke-width="2.500" stroke-dasharray="2.500 2"/><path d="M91 23 H104" stroke="#0b6fd8" stroke-width="2"/>
        <rect x="160" y="10" width="9" height="9" rx="4"/><rect x="160" y="21" width="9" height="9" rx="3"/><rect x="171" y="21" width="9" height="9" rx="3"/><rect x="172" y="11" width="7" height="7" rx="3.500" fill="none" stroke="#0b6fd8" stroke-width="2"/>
      </g>
      <defs><linearGradient id="sh" x1="0" y1="0" x2=".6" y2="1"><stop stop-color="#ff6a4a"/><stop offset=".5" stop-color="#a870f0"/><stop offset="1" stop-color="#5cb8ff"/></linearGradient></defs>
      <path fill="url(#sh)" d="M121 13 L128 10 Q132 14 136 10 L144 13 V19 L140 20 V28 H126 V20 L121 19Z"/><circle cx="144" cy="6" r="4.500" fill="#ff5030"/>
      <circle cx="206" cy="18" r="14" fill="#faf4f2" stroke="#eee3e2"/><rect x="193" y="11" width="20" height="8" rx="4" fill="#e8662a"/><rect x="197" y="13" width="6" height="4" rx="2" fill="#432"/><path d="M197 19 Q201 26 204 20Z" fill="#222"/><path d="M206 23 L209 19" stroke="#333" stroke-width="1.500"/><path fill="#ffe05a" d="M219 8 L221 12 L225 13 L221 15 L219 19 L217 15 L213 13 L217 12Z"/>
    </svg>
  </div>
  <svg class="position-absolute top-0 start-0" width="50" height="48"><defs><linearGradient id="so" x2="0" y2="1"><stop stop-color="#f26b3c"/><stop offset="1" stop-color="#e84e1c"/></linearGradient></defs><path fill="url(#so)" d="M4 10 L36 2 Q40 1 41 5 L49 35 Q49 39 45 41 Q32 48 16 47 Q12 47 11 43 L1 14 Q0 11 4 10Z"/><path d="M41 15 C36 10 12 11 11 19 C10 27 40 21 40 29 C39 38 20 40 13 34" stroke="#fff" stroke-width="6.500"/></svg>
</div>

<!-- performance readout -->
<div class="perf position-absolute d-flex">
  <div class="d-flex" style="gap:9px;padding-right:15px"><span>FPS</span><b>N/A</b></div>
  <div class="d-flex" style="gap:11px;padding:0 17px 0 19px"><span>GPU</span><b>0 <small>%</small></b></div>
  <div class="d-flex" style="gap:8px;padding:0 13px 0 19px"><span>CPU</span><b>26 <small>%</small></b></div>
  <div class="d-flex" style="gap:9px;padding-left:19px"><span>延时</span><b>N/A</b></div>
</div>
</body>
</html>
